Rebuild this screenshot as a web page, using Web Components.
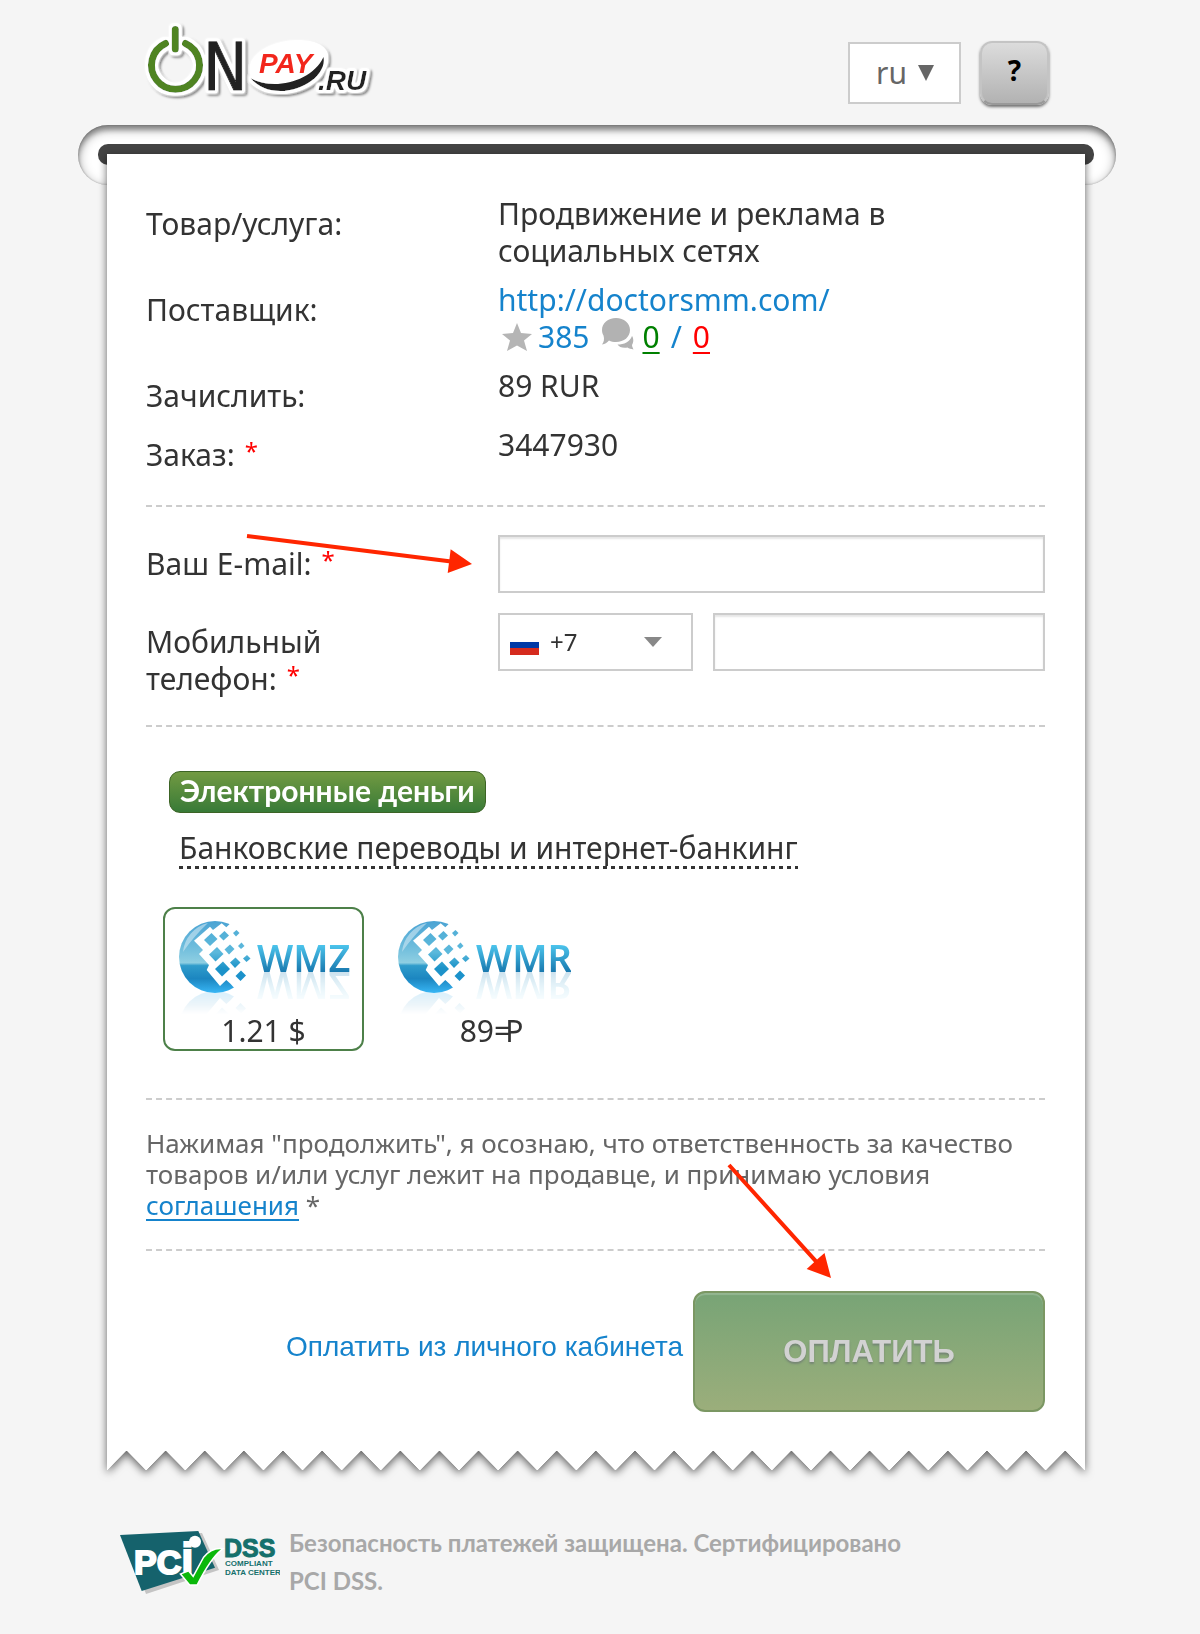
<!DOCTYPE html>
<html lang="ru">
<head>
<meta charset="utf-8">
<meta name="viewport" content="width=device-width, initial-scale=1">
<title>OnPay.ru</title>
<style>
body { margin: 0; background: #f5f5f5; color: #333; font: 30px/37px "Noto Sans", "Open Sans", sans-serif; }
</style>
</head>
<body>
<op-page>
  <op-header slot="header"></op-header>
  <op-order-info>
    <op-row><span slot="label">Товар/услуга:</span>Продвижение и реклама в социальных сетях</op-row>
    <op-row><span slot="label">Поставщик:</span><op-vendor href="http://doctorsmm.com/" score="385" good="0" bad="0"></op-vendor></op-row>
    <op-row><span slot="label">Зачислить:</span>89 RUR</op-row>
    <op-row required><span slot="label">Заказ:</span>3447930</op-row>
  </op-order-info>
  <op-contacts></op-contacts>
  <op-methods></op-methods>
  <op-agreement></op-agreement>
  <op-actions></op-actions>
  <op-footer slot="footer"></op-footer>
</op-page>

<script>
const define = (name, html, setup) => {
  const tpl = document.createElement('template');
  tpl.innerHTML = '<style>*,:host{box-sizing:border-box}:host{display:block}a{color:#1583cc;text-decoration:none}button,select,input{font:inherit;color:inherit;margin:0}svg{display:block}.req{color:red;font-size:24px;line-height:0;margin-left:10px;vertical-align:6px}</style>' + html;
  customElements.define(name, class extends HTMLElement {
    connectedCallback() {
      if (this.shadowRoot) return;
      const root = this.attachShadow({ mode: 'open' });
      root.append(tpl.content.cloneNode(true));
      if (setup) setup(this, root);
    }
  });
};

/* straight pointer arrow, from its own origin to (dx, dy) */
define('op-arrow', `
  <style>:host{position:absolute;pointer-events:none;z-index:2}svg{overflow:visible}</style>
  <svg width="1" height="1" aria-hidden="true" fill="#ff2600"><g></g></svg>`, (el, root) => {
  const dx = +el.getAttribute('dx'), dy = +el.getAttribute('dy');
  const len = Math.hypot(dx, dy), deg = Math.atan2(dy, dx) * 180 / Math.PI;
  const g = root.querySelector('g');
  g.setAttribute('transform', `rotate(${deg})`);
  g.innerHTML = `<path d="M0-2H${len - 23}V-12L${len} 0L${len - 23} 12V2H0Z"/>`;
});

define('op-logo', `
  <svg width="240" height="94" viewBox="0 0 240 94" role="img" aria-label="OnPay.ru">
    <defs>
      <filter id="sticker" x="-5%" y="-10%" width="110%" height="120%">
        <feMorphology in="SourceAlpha" operator="dilate" radius="2"/>
        <feGaussianBlur stdDeviation="1"/>
        <feComponentTransfer result="fat"><feFuncA type="linear" slope="3"/></feComponentTransfer>
        <feFlood flood-color="#fff"/>
        <feComposite in2="fat" operator="in" result="halo"/>
        <feGaussianBlur in="fat" stdDeviation="1"/>
        <feOffset dx="2" dy="2"/>
        <feComponentTransfer result="cast"><feFuncR type="linear" slope="0"/><feFuncG type="linear" slope="0"/><feFuncB type="linear" slope="0"/><feFuncA type="linear" slope=".5"/></feComponentTransfer>
        <feMerge><feMergeNode in="cast"/><feMergeNode in="halo"/><feMergeNode in="SourceGraphic"/></feMerge>
      </filter>
    </defs>
    <g filter="url(#sticker)">
      <g fill="none" stroke="#4f8420" stroke-linecap="round">
        <path d="M45.500 27.500A24 24 0 1 1 25.500 27.500" stroke-width="7"/>
        <path d="M35.300 13.500V33" stroke-width="7"/>
      </g>
      <text x="63" y="74" font-family="DejaVu Sans Condensed, DejaVu Sans, sans-serif" font-size="66" fill="#222" stroke="#222" stroke-width="1" stroke-linejoin="round">N</text>
      <ellipse cx="149" cy="48" rx="37" ry="20" transform="rotate(-12 149 48)" fill="#fff"/>
      <path d="M110.700 62.300C133 75 172 66 183.500 41C188 68 134 90 110.700 62.300Z" fill="#222"/>
      <g font-family="Liberation Sans, Arial, sans-serif" font-weight="bold" font-style="italic">
        <text x="119" y="57" font-size="28" fill="#f2281e">PAY</text>
        <text x="178" y="74" font-size="28" fill="#222">.RU</text>
      </g>
    </g>
  </svg>`);

define('op-header', `
  <style>
    :host{display:flex;justify-content:space-between;align-items:flex-start;height:125px;padding:16px 67px 0 62px}
    .tools{display:flex;align-items:center;gap:19px;padding-top:25px}
    .lang{display:grid;align-items:center;width:113px;height:62px;background:#fff;border:2px solid #ccc;color:#666}
    .lang>*{grid-area:1/1}
    .lang svg{justify-self:end;margin-right:25px;pointer-events:none}
    select{appearance:none;border:0;background:none;width:100%;height:100%;padding:0 0 2px 26px}
    button{width:69px;height:64px;border:2px solid #c4c4c4;border-bottom-color:#999;border-radius:12px;background:linear-gradient(#dcdcdc,#b2b2b2);box-shadow:0 2px 3px rgba(0,0,0,.55);color:#000;font:bold 28px/37px "Noto Sans",sans-serif;padding:0 0 6px}
  </style>
  <op-logo></op-logo>
  <div class="tools">
    <div class="lang">
      <select aria-label="Язык"><option>ru</option></select>
      <svg width="16" height="16" viewBox="0 0 16 16" aria-hidden="true"><path d="M0 0H16L8 16Z" fill="#666"/></svg>
    </div>
    <button type="button">?</button>
  </div>`);

define('op-page', `
  <style>
    :host{padding:0 84px 0 78px}
    .slot{height:60px;padding:19px 22px 0 20px;border-radius:30px;background:#fff;box-shadow:inset 0 5px 5px rgba(0,0,0,.3),inset 0 4px 12px rgba(0,0,0,.35),inset 0 0 2px rgba(0,0,0,.3)}
    .slot div{height:21px;border-radius:10px;background:#444}
    .paper{position:relative;margin:-31px 31px 0 29px;filter:drop-shadow(0 3px 4px rgba(0,0,0,.6))}
    .body{background:#fff;padding:41px 40px 38px 39px}
    .teeth{height:21px;background:conic-gradient(from 137deg at 50% 0,transparent 86deg,#fff 0) 0 0/39px 21px round}
  </style>
  <slot name="header"></slot>
  <div class="slot"><div></div></div>
  <main class="paper">
    <div class="body"><slot></slot></div>
    <div class="teeth"></div>
  </main>
  <slot name="footer"></slot>`);

define('op-order-info', `
  <style>:host{display:flex;flex-direction:column;gap:12px;padding-bottom:32px;border-bottom:2px dashed #ccc}</style>
  <slot></slot>`);

define('op-row', `
  <style>
    :host{display:grid;grid-template-columns:352px 1fr}
    .label{padding-top:10px}
    :host(:not([required])) .req{display:none}
  </style>
  <div class="label"><slot name="label"></slot><span class="req">*</span></div>
  <div class="value"><slot></slot></div>`);

define('op-vendor', `
  <style>
    .site{display:block}
    .stats{display:flex;align-items:center;height:37px;color:#1583cc}
    .star{margin:0 6px 0 4px}
    .talk{margin:0 8px 0 13px;align-self:flex-start}
    .sep{margin:0 11px}
    .good,.bad{text-decoration:underline;text-decoration-thickness:2px;text-underline-offset:4px}
    .good{color:green}.bad{color:red}
  </style>
  <a class="site"></a>
  <div class="stats">
    <svg class="star" width="30" height="30" viewBox="0 0 30 30" fill="#b5b5b5" aria-hidden="true"><path d="M15 1L19 11L30 12L22 18.500L25 29L15 23.500L5 29L8 18.500L0 12L11 11Z"/></svg><a class="score" href="#"></a>
    <svg class="talk" width="32" height="32" viewBox="0 0 32 32" fill="#b2b2b2" aria-hidden="true"><path d="M14 0C22 0 28 5 28 12S22 24 14 24C11.500 24 9 23.500 7 22.500C5 25 3 26 0 26.500C2 24 2.500 21 1.500 17.500C.5 16 0 14 0 12C0 5 6 0 14 0Z"/><path d="M30 18C31.500 20 32 24 30 27C30 28.500 31 30 31.500 31.500C29 31 27 30.500 25.500 29.500C21 30.500 17 29 15.500 26.500C22 26.500 28 24 30 18Z"/></svg><a class="good" href="#"></a><span class="sep">/</span><a class="bad" href="#"></a>
  </div>`, (el, root) => {
  const $ = s => root.querySelector(s);
  $('.site').href = el.getAttribute('href');
  $('.site').textContent = el.getAttribute('href');
  for (const k of ['score', 'good', 'bad']) $('.' + k).textContent = el.getAttribute(k);
});

define('op-contacts', `
  <style>
    :host{display:flex;flex-direction:column;gap:20px;padding:28px 0;border-bottom:2px dashed #ccc}
    .row{position:relative;display:grid;grid-template-columns:352px 1fr;align-items:start}
    label{padding:10px 100px 0 0}
    input{display:block;width:100%;min-width:0;height:58px;border:2px solid #ccc;background:#fff;padding:0 12px;box-shadow:inset 0 2px 2px rgba(0,0,0,.1);border-radius:0;outline:0}
    .phone{display:grid;grid-template-columns:195px 1fr;gap:20px}
    .code{display:grid;align-items:center;height:58px;border:2px solid #ccc;background:#fff;font-size:24px}
    .code>*{grid-area:1/1}
    .flag{margin:6px 0 0 10px;pointer-events:none}
    .caret{justify-self:end;margin-right:29px;pointer-events:none}
    select{appearance:none;border:0;background:none;width:100%;height:100%;padding:0 0 2px 50px}
    op-arrow{left:101px;top:1px}
  </style>
  <div class="row">
    <label for="email">Ваш E-mail:<span class="req">*</span></label>
    <input id="email" type="email">
    <op-arrow dx="225" dy="28"></op-arrow>
  </div>
  <div class="row">
    <label for="phone">Мобильный телефон:<span class="req">*</span></label>
    <div class="phone">
      <div class="code">
        <select aria-label="Код страны"><option>+7</option></select>
        <svg class="flag" width="29" height="20" viewBox="0 0 29 20" aria-hidden="true"><path d="M0 0H29V7H0Z" fill="#fff"/><path d="M0 7H29V14H0Z" fill="#0039a6"/><path d="M0 13H29V20H0Z" fill="#d52b1e"/></svg>
        <svg class="caret" width="18" height="10" viewBox="0 0 18 10" aria-hidden="true"><path d="M0 0H18L9 10Z" fill="#888"/></svg>
      </div>
      <input id="phone" type="tel">
    </div>
  </div>`);

define('op-wallet', `
  <style>
    label{display:block;width:201px;height:144px;border:2px solid transparent;border-radius:12px;text-align:center;cursor:pointer}
    label:has(:checked){border-color:#4d8049}
    input{position:absolute;opacity:0;width:1px;height:1px;margin:0}
    .art{display:flex;justify-content:center;align-items:flex-start;height:104px;padding-top:3px}
    .ball{-webkit-box-reflect:below -4px linear-gradient(transparent 70%,rgba(0,0,0,.2))}
    .word{margin-top:17px;-webkit-box-reflect:below -26px linear-gradient(transparent 15%,rgba(0,0,0,.3))}
    .price{line-height:36px}
    .price.rub{padding-left:18px}
    .p{margin-left:-6px}
  </style>
  <label>
    <input type="radio" name="wallet">
    <div class="art">
      <svg class="ball" width="80" height="82" viewBox="0 0 80 82" aria-hidden="true">
        <defs>
          <linearGradient id="s" x2="0" y2="1"><stop offset="0" stop-color="#4aa3d3"/><stop offset=".35" stop-color="#6dbcdc"/><stop offset=".58" stop-color="#8fcfe2"/><stop offset=".62" stop-color="#2f9ccb"/><stop offset=".8" stop-color="#1c86c0"/><stop offset="1" stop-color="#38b6f5"/></linearGradient>
          <linearGradient id="q" x2="0" y2="80" gradientUnits="userSpaceOnUse"><stop offset="0" stop-color="#4ba6d2"/><stop offset=".5" stop-color="#5cb9dc"/><stop offset=".7" stop-color="#1c93c8"/><stop offset="1" stop-color="#1b8fd0"/></linearGradient>
        </defs>
        <circle cx="39" cy="45" r="36" fill="url(#s)"/>
        <path d="M7 40A33 33 0 0 1 32 11C22 20 14 30 7 40Z" fill="#cfe8f3" opacity=".6"/>
        <path d="M18 28.700L34 14.700L37 18L45.700 11.300L50.300 15.300L60 6L80 15V78H60L54.700 72L50.300 68L44 74L30.700 58L33 53L23 42L27 38Z" fill="#fff"/>
        <g fill="url(#q)">
          <path d="M28 28L35.500 21L41.500 27L34 34Z"/><path d="M43 24L48.500 19L53 23.500L47.500 28.500Z"/><path d="M57 21L60.500 18L63.500 21L60 24.500Z"/>
          <path d="M33 42.500L41 35L47.500 42L39.500 49.500Z"/><path d="M48.500 37.500L54 32.500L58.500 37L53 42.500Z"/><path d="M62 34L65.500 30.500L68.500 34L65 37Z"/>
          <path d="M39 57L47 49.500L54 57L46 64.500Z"/><path d="M54 50.500L59.500 45.500L64.500 50.500L59 56Z"/><path d="M67 46.500L71 43L74.500 46.500L70.500 50Z"/>
          <path d="M59.500 64L65 58.500L70 63.500L64.500 69Z"/>
        </g>
      </svg>
      <svg class="word" width="96" height="56" viewBox="0 0 96 56">
        <defs><linearGradient id="w" y1="16" x2="0" y2="43" gradientUnits="userSpaceOnUse"><stop offset="0" stop-color="#4cc4ec"/><stop offset="1" stop-color="#1878ae"/></linearGradient></defs>
        <text x="1" y="43" font-family="Noto Sans, sans-serif" font-weight="600" font-size="38" fill="url(#w)"></text>
      </svg>
    </div>
    <div class="price"></div>
  </label>`, (el, root) => {
  root.querySelector('text').textContent = el.getAttribute('name');
  root.querySelector('input').checked = el.hasAttribute('selected');
  const price = root.querySelector('.price');
  if (el.hasAttribute('rub')) {
    price.classList.add('rub');
    price.innerHTML = `${el.getAttribute('price')}=<span class="p">Р</span>`;
  } else price.textContent = el.getAttribute('price');
});

define('op-methods', `
  <style>
    :host{padding:44px 0 47px;border-bottom:2px dashed #ccc}
    .tabs{display:flex;flex-direction:column;align-items:flex-start;gap:16px;padding-left:23px}
    button{border:0;background:none;padding:0;line-height:37px;cursor:pointer}
    .on{height:42px;padding:0 10px 4px;border:1px solid #3c6425;border-radius:11px;background:linear-gradient(#729a42,#387a37);color:#fff;font:bold 30px/36px Lato,sans-serif}
    .off{margin:0 10px;padding-bottom:3px;background:repeating-linear-gradient(90deg,#333 0 4px,transparent 4px 8px) 0 100%/100% 3px no-repeat}
    .cards{display:flex;gap:18px;padding:38px 0 0 17px}
  </style>
  <div class="tabs">
    <button type="button" class="on">Электронные деньги</button>
    <button type="button" class="off">Банковские переводы и интернет-банкинг</button>
  </div>
  <div class="cards">
    <op-wallet name="WMZ" price="1.21 $" selected></op-wallet>
    <op-wallet name="WMR" price="89" rub></op-wallet>
  </div>`);

define('op-agreement', `
  <style>
    :host{position:relative;padding:28px 0;border-bottom:2px dashed #ccc;color:#666;font-size:26px;line-height:31px}
    p{margin:0}
    a{text-decoration:underline;text-decoration-thickness:2px;text-underline-offset:4px}
    op-arrow{left:583px;top:65px}
  </style>
  <p>Нажимая "продолжить", я осознаю, что ответственность за качество товаров и/или услуг лежит на продавце, и принимаю условия <a href="#">соглашения</a> *</p>
  <op-arrow dx="102" dy="113"></op-arrow>`);

define('op-actions', `
  <style>
    :host{display:flex;justify-content:flex-end;align-items:center;gap:10px;padding-top:40px;font-family:"Liberation Sans",Arial,sans-serif}
    a{font-size:28px;padding-bottom:10px}
    button{width:352px;height:121px;border:2px solid #7b9763;border-radius:12px;background:linear-gradient(#78a476,#9bae7b);box-shadow:inset 0 2px 1px rgba(255,255,255,.2);color:#d2d2d2;font-weight:bold;font-size:31px;text-shadow:0 2px 2px rgba(90,90,110,.45)}
  </style>
  <a href="#">Оплатить из личного кабинета</a>
  <button type="button">ОПЛАТИТЬ</button>`);

define('op-footer', `
  <style>
    :host{display:flex;align-items:center;gap:9px;padding:53px 190px 34px 42px;color:#a8a8a8;font:bold 24px/38px Lato,sans-serif}
    svg{flex:none}
    p{margin:0}
  </style>
  <svg width="160" height="66" viewBox="0 0 160 66" role="img" aria-label="PCI DSS">
    <path d="M4 8L82 4L99 41L26 65Z" fill="#c4c4c4"/>
    <path d="M0 6L78.300 2L95 38.700L21.700 62Z" fill="#15626c"/>
    <g font-family="Liberation Sans, Arial, sans-serif" font-weight="bold">
      <text x="14" y="45" font-size="34" fill="#fff" stroke="#fff" stroke-width="2">PC<tspan font-size="44">i</tspan></text>
      <circle cx="75" cy="12.700" r="6" fill="#fff"/>
      <path d="M61.700 45.300L68.300 42.700L73.300 48.700L84 29Q91 20 101 20.300Q90 29 76.700 55.300H70Z" fill="#0bb80b" stroke="#fff" stroke-width="3" paint-order="stroke"/>
      <g fill="#15706c">
        <text x="104" y="28" font-size="25" stroke="#15706c">DSS</text>
        <text x="105" y="37" font-size="8">COMPLIANT</text>
        <text x="105" y="46" font-size="8">DATA CENTER</text>
      </g>
    </g>
  </svg>
  <p>Безопасность платежей защищена. Сертифицировано PCI DSS.</p>`);
</script>
</body>
</html>
